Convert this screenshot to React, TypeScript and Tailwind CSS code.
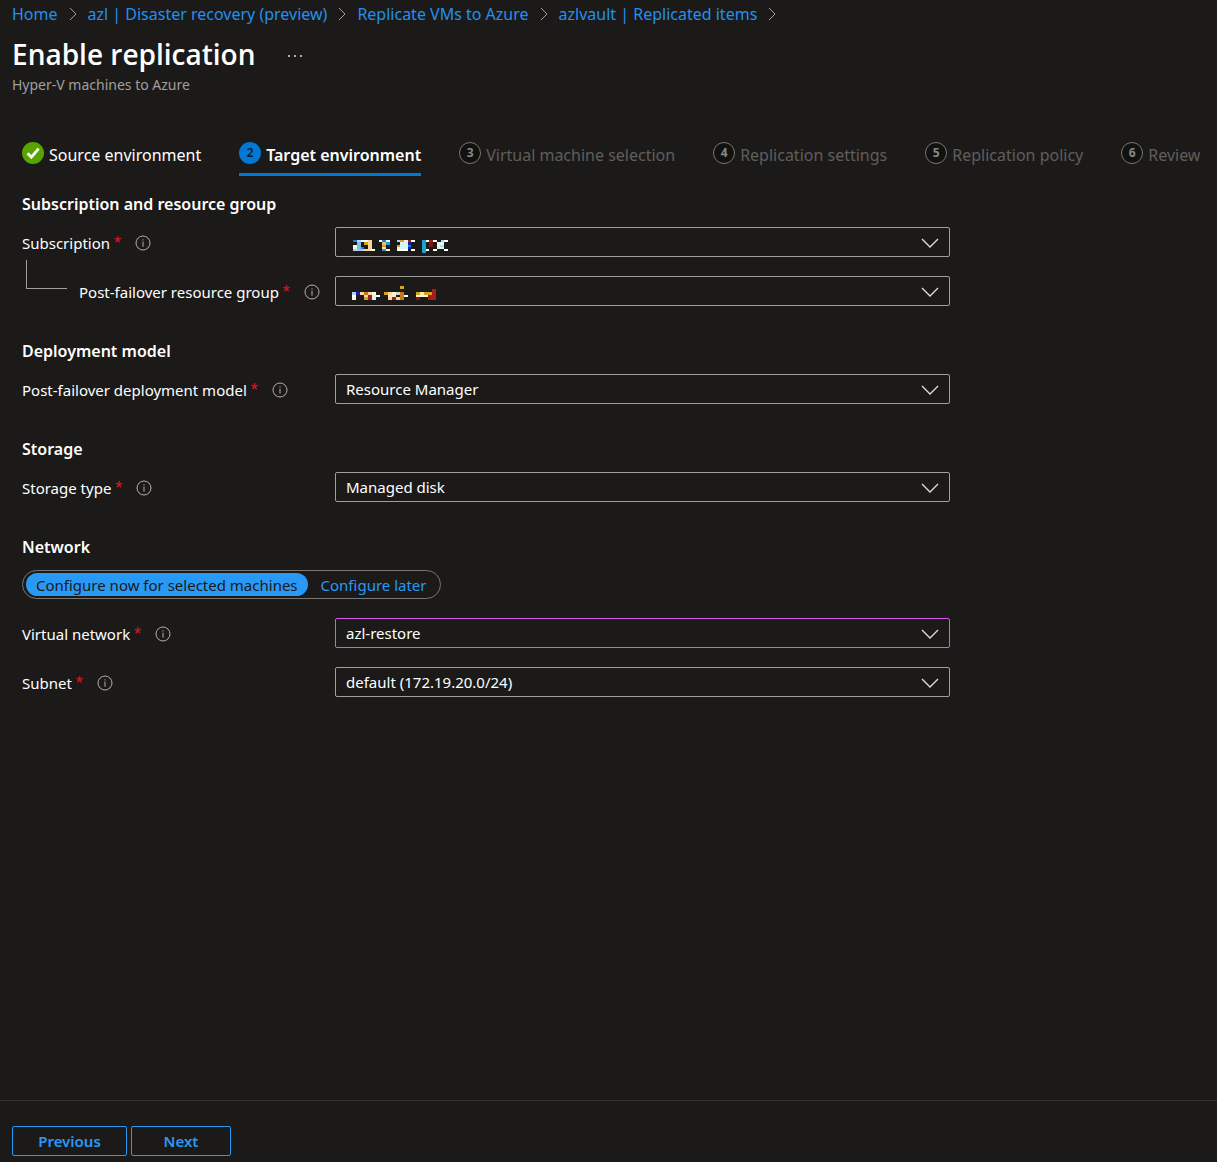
import React, { useId, useState } from "react";

const crumbs = [
  "Home",
  "azl | Disaster recovery (preview)",
  "Replicate VMs to Azure",
  "azlvault | Replicated items",
];

const steps = [
  "Source environment",
  "Target environment",
  "Virtual machine selection",
  "Replication settings",
  "Replication policy",
  "Review",
];

type Block = [x: number, y: number, w: number, h: number, fill: string];

const subscriptionBlocks: Block[] = [
  [1, 3, 4, 2, "#1a7fd0"], [5, 3, 4, 2, "#b5dcff"], [9, 3, 7, 2, "#ffffff"], [16, 3, 4, 2, "#fcd6a0"],
  [5, 5, 4, 3, "#7cbcf0"], [12, 5, 4, 3, "#d9a21b"], [16, 5, 4, 3, "#fcd6a0"],
  [1, 8, 4, 2, "#ffffff"], [5, 8, 4, 2, "#7cbcf0"], [16, 8, 4, 2, "#fcd6a0"],
  [1, 10, 4, 2, "#fff3cf"], [5, 10, 4, 2, "#7cbcf0"], [9, 10, 3, 2, "#1a7fd0"], [16, 10, 4, 2, "#fcd6a0"],
  [1, 12, 4, 2, "#a9d4fa"], [5, 12, 4, 2, "#a8c0ee"], [9, 12, 3, 2, "#a9d4fa"], [12, 12, 7, 2, "#fcd6a0"], [19, 12, 4, 2, "#fffbd5"],
  [27, 3, 3, 2, "#ffffff"], [30, 3, 4, 2, "#1a7fd0"], [34, 3, 4, 2, "#ffffff"],
  [30, 5, 4, 3, "#eebd72"], [34, 5, 4, 3, "#1c9fd2"],
  [30, 8, 4, 2, "#d9a21b"], [30, 10, 4, 2, "#fcd6a0"],
  [30, 12, 4, 2, "#1c9fd2"], [34, 12, 4, 2, "#fffbd5"],
  [45, 3, 3, 2, "#a9d4fa"], [48, 3, 4, 2, "#d9a21b"], [52, 3, 4, 2, "#fff3cf"], [56, 3, 3, 2, "#a51c1c"], [59, 3, 4, 2, "#ffffff"],
  [48, 5, 8, 3, "#d5f6fb"], [56, 5, 3, 3, "#1c1ca8"],
  [45, 8, 3, 2, "#d9a21b"], [48, 8, 8, 2, "#d5f6fb"], [56, 8, 3, 2, "#1a7fd0"],
  [45, 10, 3, 2, "#fff3cf"], [48, 10, 8, 2, "#d5f6fb"], [56, 10, 3, 2, "#1c1ca8"],
  [45, 12, 11, 2, "#ffffff"], [59, 12, 4, 2, "#ffffff"],
  [70, 3, 4, 13, "#1c9fd2"], [74, 3, 3, 2, "#fff3cf"], [77, 3, 4, 2, "#a51c1c"], [81, 3, 4, 2, "#ffffff"], [89, 3, 3, 2, "#a9d4fa"], [92, 3, 4, 2, "#ffffff"],
  [77, 5, 4, 5, "#7e1616"], [85, 5, 7, 3, "#e9f8ee"], [85, 8, 3, 2, "#fffbd5"], [88, 8, 4, 2, "#a9dff5"],
  [85, 10, 7, 2, "#d5f6fb"], [74, 12, 3, 2, "#ffffff"], [81, 12, 4, 2, "#ffffff"], [92, 12, 4, 2, "#ffffff"],
];

const resourceGroupBlocks: Block[] = [
  [0, 6, 4, 3, "#a9d4fa"], [4, 6, 4, 3, "#1c1ca8"], [8, 6, 4, 3, "#fcd6a0"], [12, 6, 4, 3, "#c67a15"], [16, 6, 4, 3, "#fcd6a0"], [20, 6, 4, 3, "#fffbd5"],
  [0, 9, 4, 2, "#ffffff"], [12, 9, 4, 2, "#fcd6a0"], [16, 9, 4, 2, "#a51c1c"], [20, 9, 4, 2, "#d5f6fb"], [24, 9, 4, 2, "#ffffff"],
  [0, 11, 4, 3, "#fff3cf"], [12, 11, 4, 3, "#d9a21b"], [16, 11, 4, 3, "#a51c1c"], [20, 11, 4, 3, "#d5f6fb"],
  [32, 6, 4, 3, "#d9a21b"], [36, 6, 4, 3, "#fcd6a0"], [40, 6, 4, 3, "#fff3cf"], [44, 6, 4, 3, "#c9dcc0"],
  [48, 0, 4, 3, "#d9a21b"], [48, 6, 4, 8, "#c67a15"], [52, 9, 4, 2, "#ffffff"],
  [36, 9, 8, 2, "#fcecc0"], [36, 11, 4, 3, "#fcd6a0"], [40, 11, 4, 3, "#a51c1c"], [44, 11, 4, 3, "#fcd6a0"],
  [64, 6, 4, 3, "#d9a21b"], [68, 6, 4, 3, "#fcecc0"], [72, 6, 8, 3, "#d9a21b"],
  [64, 9, 12, 2, "#fff3cf"], [64, 11, 4, 3, "#7e1616"],
  [80, 3, 4, 11, "#a51c1c"], [76, 9, 4, 5, "#a51c1c"],
];

function CrumbArrow() {
  return (
    <svg viewBox="0 0 8 14" className="h-[14px] w-2 shrink-0" fill="none" stroke="#a19f9d" aria-hidden="true">
      <path d="M1 1l6 6-6 6" />
    </svg>
  );
}

function InfoIcon() {
  return (
    <svg viewBox="0 0 16 16" className="ml-[14px] size-4 shrink-0" fill="none" stroke="#b3b0ad" aria-hidden="true">
      <circle cx="8" cy="8" r="7" />
      <path d="M8 6.7v5M8 4.3v1.2" />
    </svg>
  );
}

function StepBadge({ index }: { index: number }) {
  if (index === 0) {
    return (
      <svg viewBox="0 0 22 22" className="mb-[3px] size-[22px] shrink-0" aria-hidden="true">
        <circle cx="11" cy="11" r="11" fill="#57a300" />
        <path d="M5.5 11.2l3.9 3.9 7.2-8.4" fill="none" stroke="#fff" strokeWidth="2.8" />
      </svg>
    );
  }
  return (
    <span
      className={
        index === 1
          ? "mb-[3px] flex size-[22px] shrink-0 items-center justify-center rounded-full bg-[#0078d4] pb-px text-xs font-semibold text-[#1b1a19]"
          : "mb-[3px] flex size-[22px] shrink-0 items-center justify-center rounded-full border border-[#797775] bg-[#111110] pb-px text-xs font-bold text-[#8a8886]"
      }
    >
      {index + 1}
    </span>
  );
}

type FieldProps = {
  label: string;
  value?: string;
  blocks?: Block[];
  nested?: boolean;
  active?: boolean;
};

function Field({ label, value = "", blocks, nested, active }: FieldProps) {
  const id = useId();
  return (
    <div className="flex h-[30px] items-center">
      <div className="flex w-[313px] shrink-0 items-center pt-px whitespace-nowrap">
        {nested && <span className="mr-3 -mt-[34px] ml-1 h-[29px] w-[41px] shrink-0 border-b border-l border-[#a19f9d]" />}
        <label htmlFor={id}>
          {label} <span className="font-['Liberation_Sans',sans-serif] text-lg leading-none text-[#e81123]">*</span>
        </label>
        <InfoIcon />
      </div>
      <div className="relative h-full max-w-[615px] flex-1">
        <select
          id={id}
          className={
            active
              ? "h-full w-full appearance-none rounded-xs border border-[#d559f0] bg-transparent px-[10px] outline-none"
              : "h-full w-full appearance-none rounded-xs border border-[#a19f9d] bg-transparent px-[10px] outline-none"
          }
        >
          <option className="bg-[#1b1a19]">{value}</option>
        </select>
        {blocks && (
          <svg
            viewBox="0 0 96 16"
            className="pointer-events-none absolute top-[10px] left-[17px] h-4 w-24"
            shapeRendering="crispEdges"
            aria-hidden="true"
          >
            {blocks.map(([x, y, w, h, fill], i) => (
              <rect key={i} x={x} y={y} width={w} height={h} fill={fill} />
            ))}
          </svg>
        )}
        <svg
          viewBox="0 0 18 10"
          className="pointer-events-none absolute top-[11px] right-[11px] h-[10px] w-[18px]"
          fill="none"
          stroke="#e1dfdd"
          strokeWidth="1.3"
          aria-hidden="true"
        >
          <path d="M1 1l8 8 8-8" />
        </svg>
      </div>
    </div>
  );
}

function Section({ title, children }: { title: string; children: React.ReactNode }) {
  return (
    <section>
      <h2 className="mb-[11px] text-base leading-6 font-semibold">{title}</h2>
      <div className="flex flex-col gap-[19px]">{children}</div>
    </section>
  );
}

export default function App() {
  const [mode, setMode] = useState(0);
  return (
    <div className="flex min-h-screen flex-col bg-[#1b1a19] font-['Noto_Sans',sans-serif] text-[15px] leading-5 text-white">
      <header className="px-3">
        <nav aria-label="Breadcrumb" className="flex h-7 items-center gap-[11px] text-base whitespace-nowrap text-[#2290f0]">
          {crumbs.map((crumb) => (
            <React.Fragment key={crumb}>
              <a href="#">{crumb}</a>
              <CrumbArrow />
            </React.Fragment>
          ))}
        </nav>
        <div className="mt-1 flex h-11 items-center gap-8">
          <h1 className="font-['Open_Sans',sans-serif] text-[28px] font-semibold">Enable replication</h1>
          <button type="button" aria-label="More actions" className="flex h-8 w-4 items-center justify-center pt-1">
            <svg viewBox="0 0 16 4" className="h-1 w-4" fill="#e1dfdd" aria-hidden="true">
              <circle cx="2" cy="2" r="1" />
              <circle cx="8" cy="2" r="1" />
              <circle cx="14" cy="2" r="1" />
            </svg>
          </button>
        </div>
        <p className="text-sm leading-[18px] text-[#a19f9d]">Hyper-V machines to Azure</p>
      </header>

      <main className="flex-1 px-[22px] pt-[38px]">
        <div role="tablist" className="flex h-11 gap-[38px] text-base whitespace-nowrap">
          {steps.map((step, i) => (
            <button
              key={step}
              type="button"
              role="tab"
              aria-selected={i === 1}
              className={
                i === 0
                  ? "flex items-center gap-[5px] border-b-3 border-transparent pt-1"
                  : i === 1
                    ? "flex items-center gap-[5px] border-b-3 border-[#0078d4] pt-1 font-semibold"
                    : "flex items-center gap-[5px] border-b-3 border-transparent pt-1 text-[#605e5c]"
              }
            >
              <StepBadge index={i} />
              {step}
            </button>
          ))}
        </div>

        <form className="mt-4 flex flex-col gap-[33px]">
          <Section title="Subscription and resource group">
            <Field label="Subscription" blocks={subscriptionBlocks} />
            <Field label="Post-failover resource group" blocks={resourceGroupBlocks} nested />
          </Section>
          <Section title="Deployment model">
            <Field label="Post-failover deployment model" value="Resource Manager" />
          </Section>
          <Section title="Storage">
            <Field label="Storage type" value="Managed disk" />
          </Section>
          <Section title="Network">
            <div className="flex h-[29px] items-center gap-[3px] self-start rounded-full border border-[#797775] px-[3px]">
              {["Configure now for selected machines", "Configure later"].map((text, i) => (
                <label
                  key={text}
                  className={
                    mode === i
                      ? "relative flex h-[23px] items-center rounded-full bg-[#2899f5] px-[10px] text-[#1b1a19]"
                      : "relative flex h-[23px] items-center rounded-full px-[10px] text-[#2899f5]"
                  }
                >
                  <input
                    type="radio"
                    name="network-mode"
                    className="sr-only"
                    checked={mode === i}
                    onChange={() => setMode(i)}
                  />
                  {text}
                </label>
              ))}
            </div>
            <Field label="Virtual network" value="azl-restore" active />
            <Field label="Subnet" value="default (172.19.20.0/24)" />
          </Section>
        </form>
      </main>

      <footer className="flex gap-1 border-t border-[#323130] px-3 pt-[25px] pb-[6px] font-semibold text-[#2899f5]">
        <button type="button" className="h-[30px] w-[115px] rounded-xs border border-[#2899f5]">
          Previous
        </button>
        <button type="button" className="h-[30px] w-[100px] rounded-xs border border-[#2899f5]">
          Next
        </button>
      </footer>
    </div>
  );
}
